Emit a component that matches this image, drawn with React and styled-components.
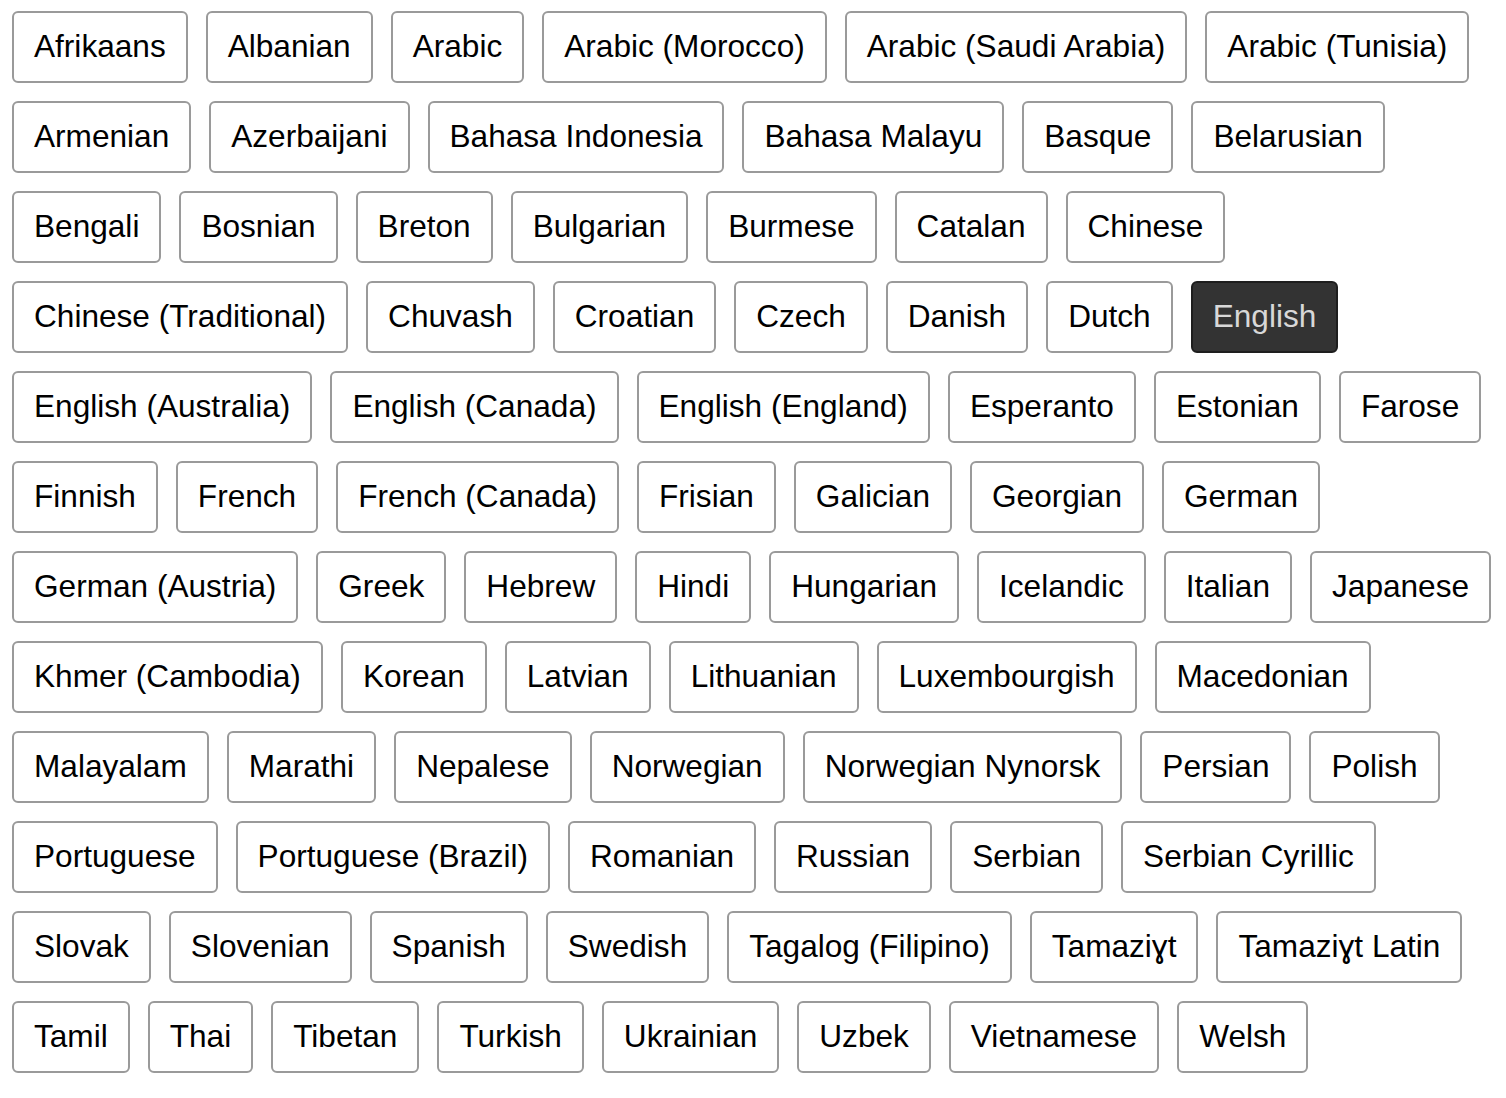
import React from "react";
import styled, { createGlobalStyle } from "styled-components";

const GlobalStyle = createGlobalStyle`
  body {
    margin: 0;
    background: #fff;
    font-family: "Liberation Sans", Arial, Helvetica, sans-serif;
  }
`;

const LANGUAGES = [
  "Afrikaans", "Albanian", "Arabic", "Arabic (Morocco)", "Arabic (Saudi Arabia)", "Arabic (Tunisia)",
  "Armenian", "Azerbaijani", "Bahasa Indonesia", "Bahasa Malayu", "Basque", "Belarusian",
  "Bengali", "Bosnian", "Breton", "Bulgarian", "Burmese", "Catalan", "Chinese",
  "Chinese (Traditional)", "Chuvash", "Croatian", "Czech", "Danish", "Dutch", "English",
  "English (Australia)", "English (Canada)", "English (England)", "Esperanto", "Estonian", "Farose",
  "Finnish", "French", "French (Canada)", "Frisian", "Galician", "Georgian", "German",
  "German (Austria)", "Greek", "Hebrew", "Hindi", "Hungarian", "Icelandic", "Italian", "Japanese",
  "Khmer (Cambodia)", "Korean", "Latvian", "Lithuanian", "Luxembourgish", "Macedonian",
  "Malayalam", "Marathi", "Nepalese", "Norwegian", "Norwegian Nynorsk", "Persian", "Polish",
  "Portuguese", "Portuguese (Brazil)", "Romanian", "Russian", "Serbian", "Serbian Cyrillic",
  "Slovak", "Slovenian", "Spanish", "Swedish", "Tagalog (Filipino)", "Tamaziɣt", "Tamaziɣt Latin",
  "Tamil", "Thai", "Tibetan", "Turkish", "Ukrainian", "Uzbek", "Vietnamese", "Welsh",
];

const List = styled.div`
  display: flex;
  flex-wrap: wrap;
  gap: 18px;
  padding: 11px 12px;
  width: 1506px;
  box-sizing: border-box;
`;

const LangButton = styled.button`
  display: flex;
  align-items: center;
  height: 72px;
  box-sizing: border-box;
  padding: 0 20px;
  border: 2px solid ${(p) => (p.$active ? "#1e1e1e" : "#9a9a9a")};
  border-radius: 6px;
  background: ${(p) => (p.$active ? "#333" : "#fff")};
  color: ${(p) => (p.$active ? "#d8d8d8" : "#000")};
  font-family: "Liberation Sans", Arial, Helvetica, sans-serif;
  font-size: 31.6px;
  line-height: 1;
  white-space: nowrap;
  cursor: pointer;
`;

export default function App() {
  return (
    <>
      <GlobalStyle />
      <List>
        {LANGUAGES.map((lang) => (
          <LangButton key={lang} $active={lang === "English"}>
            {lang}
          </LangButton>
        ))}
      </List>
    </>
  );
}
